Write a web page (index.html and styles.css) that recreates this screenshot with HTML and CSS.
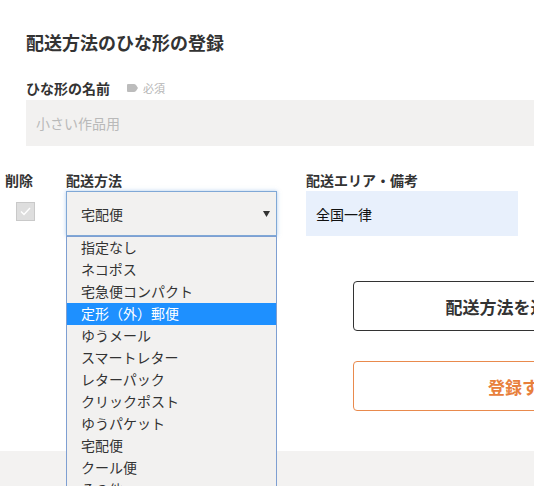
FILE: index.html
```html
<!DOCTYPE html>
<html lang="ja">
<head>
<meta charset="utf-8">
<title>配送方法のひな形の登録</title>
<link rel="stylesheet" href="styles.css">
</head>
<body>
<div class="page">
  <section class="head">
    <h1 class="title">配送方法のひな形の登録</h1>
    <div class="name-label">
      <span class="label-text">ひな形の名前</span>
      <span class="required">
        <svg class="tag" width="11" height="8" viewBox="0 0 11 8"><path d="M1 0 H7 Q8 0 9 1 L11 4 L9 7 Q8 8 7 8 H1 Q0 8 0 7 V1 Q0 0 1 0 Z" fill="#bcbcbc"/></svg>
        必須
      </span>
    </div>
    <div class="name-input">小さい作品用</div>
  </section>

  <section class="method-grid">
    <div class="col-label">削除</div>
    <div class="col-label">配送方法</div>
    <div class="col-label">配送エリア・備考</div>

    <div class="delete-cell">
      <span class="checkbox">
        <svg width="11" height="9" viewBox="0 0 11 9"><path d="M1 4.5 L4 7.5 L10 1" fill="none" stroke="#ffffff" stroke-width="1.4"/></svg>
      </span>
    </div>
    <div class="select-cell">
      <div class="select">
        <span>宅配便</span>
        <svg class="arrow" width="7" height="6" viewBox="0 0 7 6"><path d="M0 0 H7 L3.5 6 Z" fill="#333333"/></svg>
      </div>
      <ul class="dropdown">
        <li>指定なし</li>
        <li>ネコポス</li>
        <li>宅急便コンパクト</li>
        <li class="active">定形（外）郵便</li>
        <li>ゆうメール</li>
        <li>スマートレター</li>
        <li>レターパック</li>
        <li>クリックポスト</li>
        <li>ゆうパケット</li>
        <li>宅配便</li>
        <li>クール便</li>
        <li>その他</li>
      </ul>
    </div>
    <div class="area-cell">
      <div class="area-input">全国一律</div>
    </div>
  </section>

  <section class="actions">
    <div class="btn btn-add">配送方法を追加する</div>
    <div class="btn btn-save">登録する</div>
  </section>

  <footer class="band"></footer>
</div>
</body>
</html>
```

FILE: styles.css
```css
html, body {
  margin: 0;
  padding: 0;
  overflow: hidden;
  background: #ffffff;
}
body {
  font-family: "Noto Sans CJK JP", "Noto Sans", sans-serif;
  color: #333333;
  font-size: 14px;
}
.page {
  width: 534px;
}
.head {
  padding-left: 26px;
}
.title {
  margin: 0;
  padding-top: 30px;
  font-size: 18px;
  line-height: 24px;
  font-weight: bold;
  color: #333333;
}
.name-label {
  margin-top: 24px;
  height: 20px;
  display: flex;
  align-items: center;
  line-height: 20px;
}
.label-text {
  font-size: 14px;
  font-weight: bold;
}
.required {
  margin-left: 17px;
  display: flex;
  align-items: center;
  gap: 5px;
  font-size: 11px;
  color: #b5b5b5;
}
.name-input {
  margin-top: 2px;
  height: 46px;
  background: #f2f1f0;
  display: flex;
  align-items: center;
  padding-left: 10px;
  font-size: 14px;
  color: #b9b9b9;
}
.method-grid {
  display: grid;
  grid-template-columns: 32px 211px 212px;
  column-gap: 29px;
  row-gap: 1px;
  padding-left: 5px;
  margin-top: 24px;
}
.col-label {
  font-size: 14px;
  font-weight: bold;
  line-height: 20px;
  height: 20px;
  white-space: nowrap;
}
.delete-cell {
  padding-top: 11px;
  padding-left: 11px;
}
.checkbox {
  display: flex;
  width: 17px;
  height: 17px;
  align-items: center;
  justify-content: center;
  background: #dedede;
  border: 1px solid #c9c9c9;
}
.select-cell {
  position: relative;
}
.select {
  box-sizing: border-box;
  height: 45px;
  border: 1px solid #80a8d6;
  box-shadow: 0 0 4px rgba(110, 160, 220, 0.55);
  background: #f2f1f0;
  display: flex;
  align-items: center;
  justify-content: space-between;
  padding: 0 6px 0 14px;
  font-size: 14px;
}
.dropdown {
  position: absolute;
  left: 0;
  top: 45px;
  z-index: 5;
  box-sizing: border-box;
  width: 211px;
  margin: 0;
  padding: 0;
  list-style: none;
  border: 1px solid #7e9fd2;
  background: #f2f1f0;
}
.dropdown li {
  height: 22px;
  line-height: 21px;
  padding-left: 14px;
  font-size: 14px;
  color: #333333;
}
.dropdown li.active {
  background: #1e90ff;
  color: #ffffff;
}
.area-input {
  height: 45px;
  background: #e8f0fc;
  display: flex;
  align-items: center;
  padding-left: 10px;
  font-size: 14px;
  color: #111111;
}
.actions {
  margin-top: 45px;
  padding-left: 353px;
  display: flex;
  flex-direction: column;
  gap: 30px;
}
.btn {
  box-sizing: border-box;
  width: 338px;
  height: 50px;
  border-radius: 4px;
  display: flex;
  align-items: center;
  justify-content: center;
  font-size: 17px;
  font-weight: bold;
  background: #ffffff;
  flex-shrink: 0;
}
.btn-add {
  border: 1px solid #333333;
  color: #333333;
}
.btn-save {
  border: 1px solid #e98a4d;
  color: #e8803c;
}
.band {
  margin-top: 40px;
  height: 60px;
  background: #f3f2f1;
}
```
